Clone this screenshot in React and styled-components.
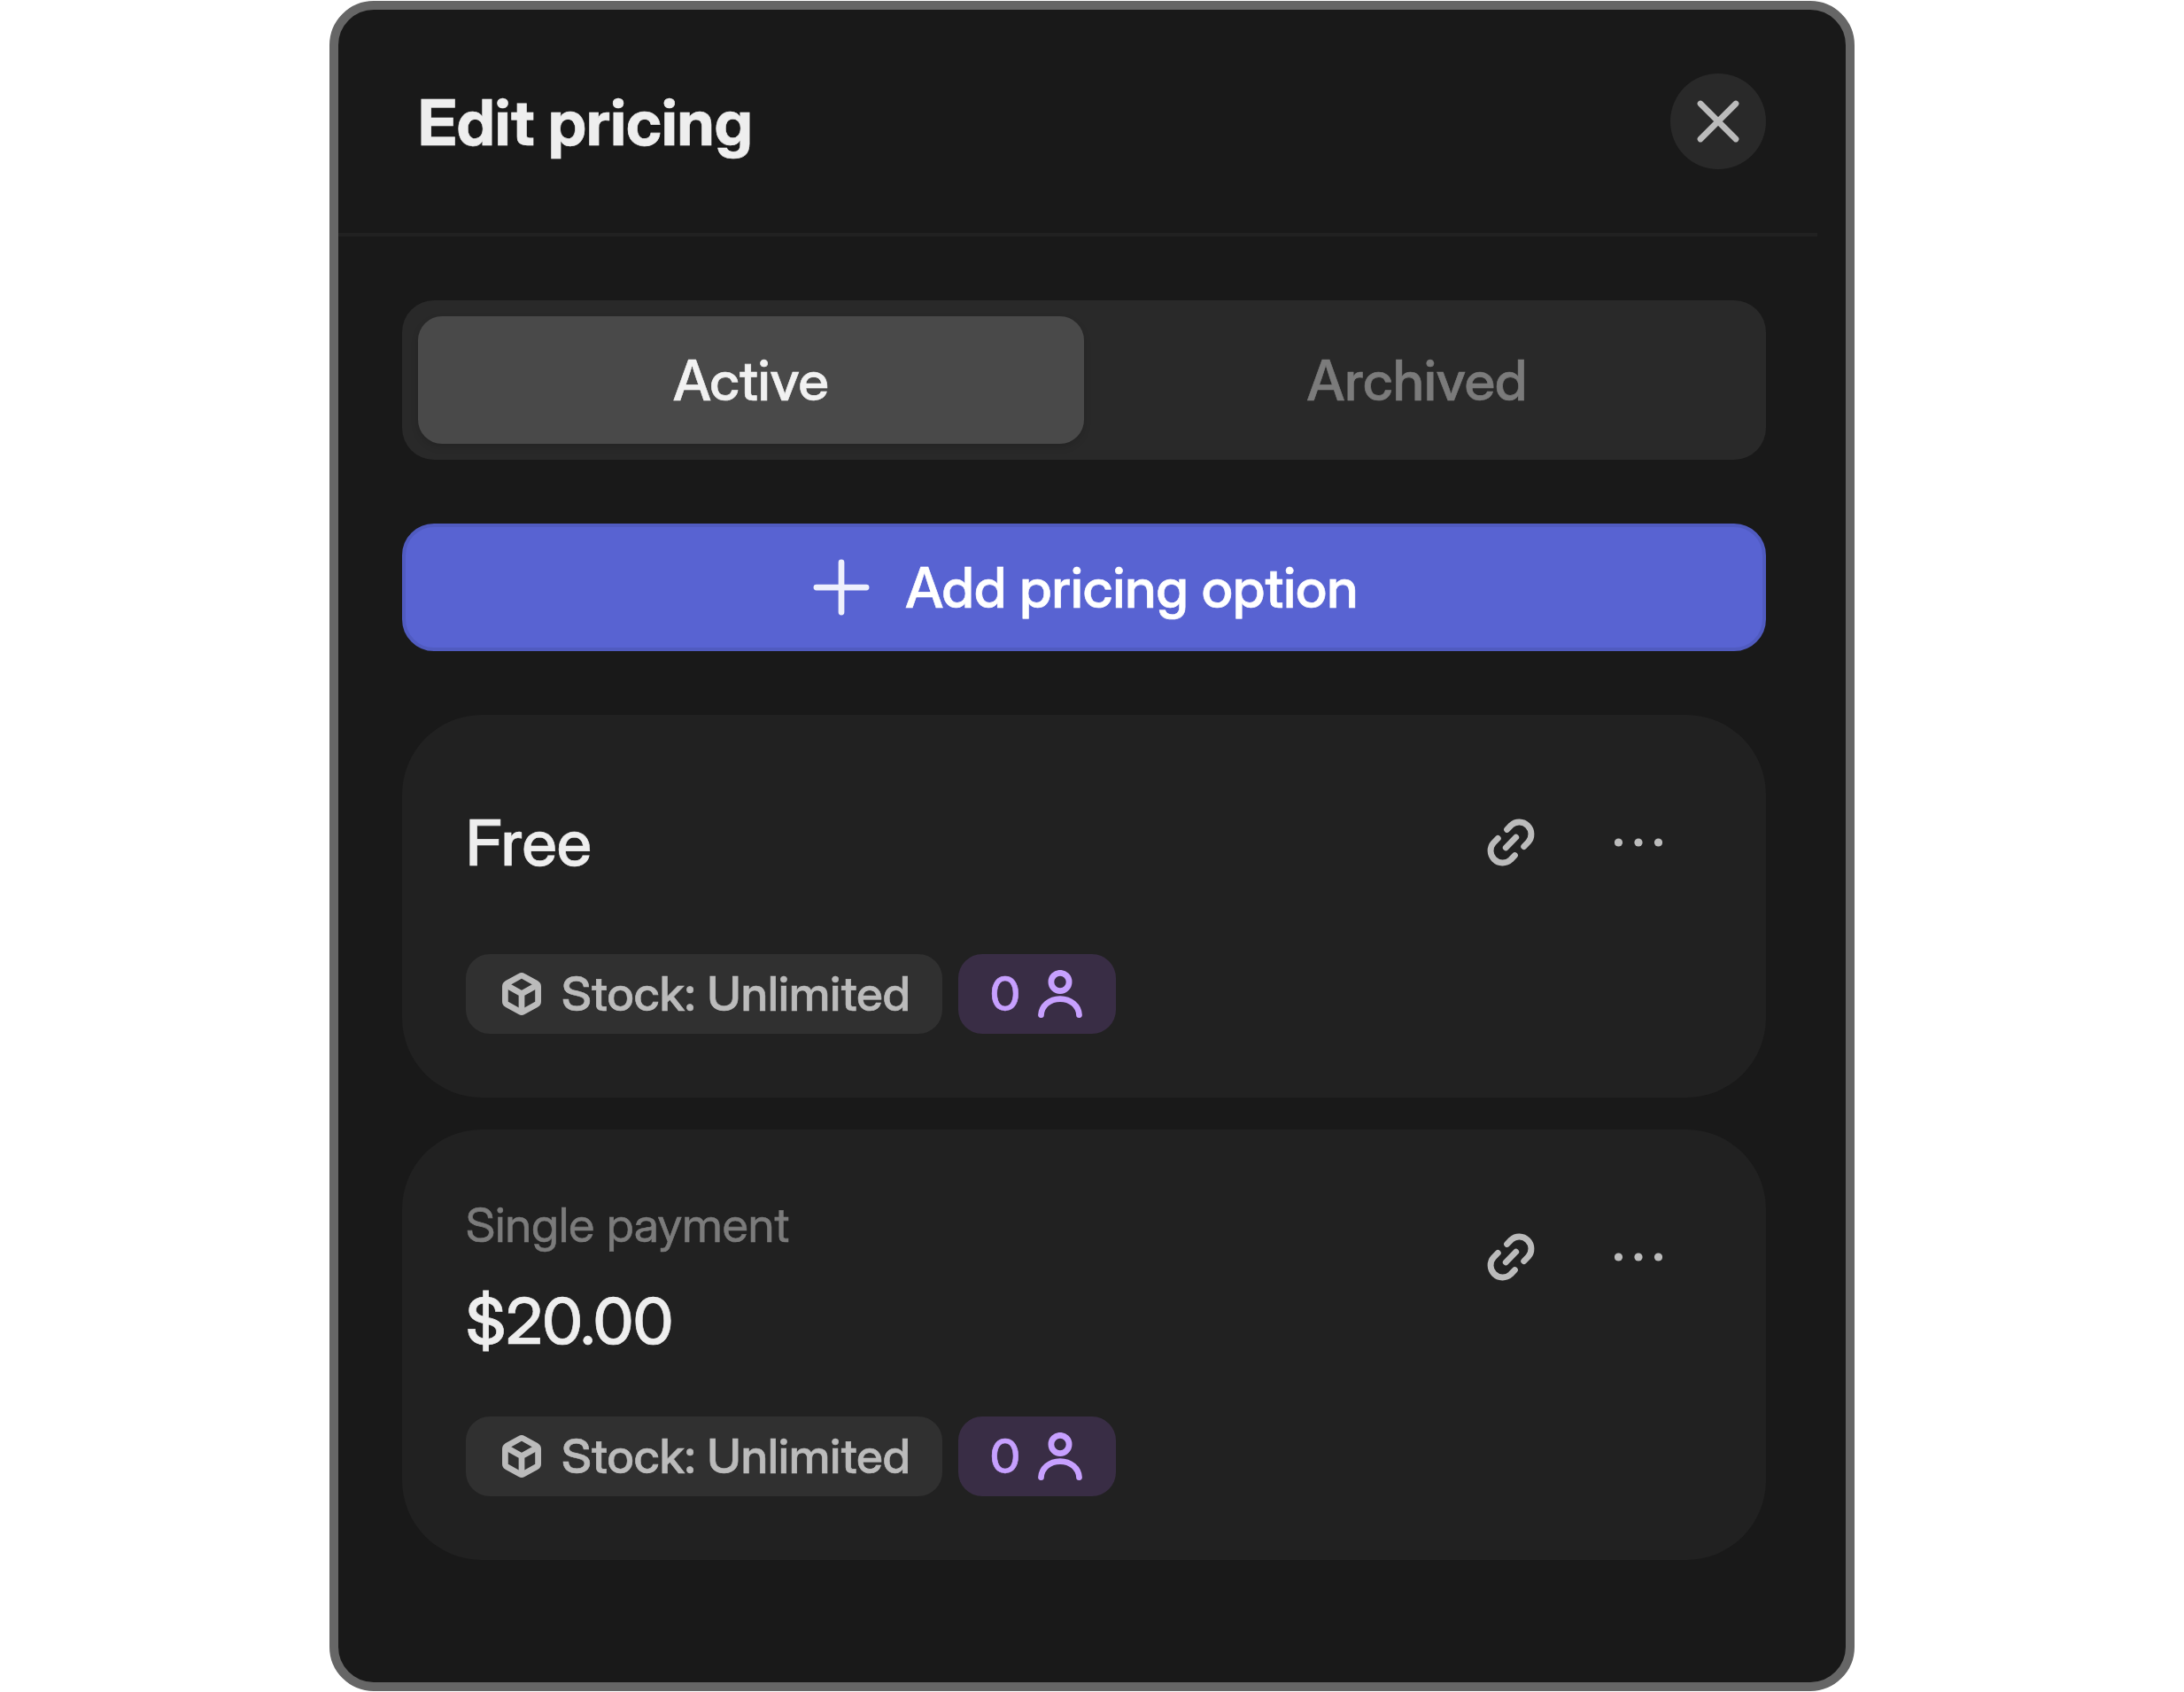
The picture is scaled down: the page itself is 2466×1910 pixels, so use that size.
import React, { useState } from 'react';
import styled, { createGlobalStyle } from 'styled-components';

const plans = [
    { id: 'free', price: 'Free', stock: 'Unlimited', members: 0 },
    {
        id: 'single',
        label: 'Single payment',
        price: '$20.00',
        stock: 'Unlimited',
        members: 0,
    },
];

const CloseIcon = () => (
    <Icon size={54} viewBox='0 0 54 54' strokeWidth='6.75'>
        <path d='M7 7L47 47M47 7L7 47' />
    </Icon>
);

const PlusIcon = () => (
    <Icon size={72} viewBox='0 0 72 72' strokeWidth='6.75'>
        <path d='M36 7.9V64.1M7.9 36H64.1' />
    </Icon>
);

const LinkIcon = () => (
    <Icon size={54} viewBox='0 0 54 54' strokeWidth='6.9'>
        <path d='M22.6 12.4L27.3 7.5A13.6 13.6 0 0 1 46.5 26.7L41.7 31.6' />
        <path d='M12.3 22.4L7.5 27.3A13.6 13.6 0 0 0 26.7 46.5L31.4 41.6' />
        <path d='M21.3 32.8L32.7 21.2' />
    </Icon>
);

const DotsIcon = () => (
    <Icon size={54} viewBox='0 0 54 54' strokeWidth='0'>
        <circle cx='4.5' cy='27' r='4.6' fill='currentColor' />
        <circle cx='27' cy='27' r='4.6' fill='currentColor' />
        <circle cx='49.5' cy='27' r='4.6' fill='currentColor' />
    </Icon>
);

const BoxIcon = () => (
    <Icon size={54} viewBox='0 0 54 54' strokeWidth='6.75'>
        <path d='M25.3 6.9Q27 5.9 28.7 6.9L43.8 15.3Q45.6 16.4 45.6 18.5V35.5Q45.6 37.6 43.8 38.7L28.7 47.1Q27 48.1 25.3 47.1L10.2 38.7Q8.4 37.6 8.4 35.5V18.5Q8.4 16.4 10.2 15.3Z' />
        <path d='M9.6 17L27 26.8L44.4 17M27 26.8V46.5' />
    </Icon>
);

const PersonIcon = () => (
    <Icon size={54} viewBox='0 0 54 54' strokeWidth='6.75'>
        <circle cx='27' cy='13.4' r='10.1' />
        <path d='M5.5 50.6C6 40.5 15 32.5 27 32.5S48 40.5 48.5 50.6' />
    </Icon>
);

const PlanCard = ({ plan }) => (
    <Card>
        <CardTop>
            <PlanInfo>
                {plan.label && <PlanLabel>{plan.label}</PlanLabel>}
                <Price $tall={!plan.label}>{plan.price}</Price>
            </PlanInfo>
            <Actions>
                <ActionButton aria-label='Copy link'>
                    <LinkIcon />
                </ActionButton>
                <ActionButton aria-label='More'>
                    <DotsIcon />
                </ActionButton>
            </Actions>
        </CardTop>
        <Badges>
            <Badge>
                <BoxIcon />
                <BadgeText>Stock: {plan.stock}</BadgeText>
            </Badge>
            <Badge $purple>
                <BadgeText>{plan.members}</BadgeText>
                <PersonIcon />
            </Badge>
        </Badges>
    </Card>
);

export default function App() {
    const [tab, setTab] = useState('Active');

    return (
        <Page>
            <GlobalStyle />
            <Modal>
                <Header>
                    <Title>Edit pricing</Title>
                    <CloseButton aria-label='Close'>
                        <CloseIcon />
                    </CloseButton>
                </Header>
                <Body>
                    <Tabs>
                        {['Active', 'Archived'].map((name) => (
                            <Tab
                                key={name}
                                $active={tab === name}
                                onClick={() => setTab(name)}
                            >
                                {name}
                            </Tab>
                        ))}
                    </Tabs>
                    <AddButton>
                        <PlusIcon />
                        <span>Add pricing option</span>
                    </AddButton>
                    <PlanList>
                        {plans.map((plan) => (
                            <PlanCard key={plan.id} plan={plan} />
                        ))}
                    </PlanList>
                </Body>
            </Modal>
        </Page>
    );
}

const GlobalStyle = createGlobalStyle`
    * {
        box-sizing: border-box;
    }

    body {
        margin: 0;
        background: #fff;
        font-family: 'Inter Display', Inter, 'Liberation Sans', sans-serif;
        font-variation-settings: 'opsz' 32;
        -webkit-text-stroke: 0.6px;
    }

    button {
        margin: 0;
        padding: 0;
        border: 0;
        background: none;
        font: inherit;
        font-variation-settings: inherit;
        cursor: pointer;
    }
`;

const Icon = styled.svg`
    display: block;
    flex: none;
    width: ${(props) => props.size}px;
    height: ${(props) => props.size}px;
    fill: none;
    stroke: currentColor;
    stroke-linecap: round;
    stroke-linejoin: round;
`;

const Page = styled.div`
    display: flex;
    justify-content: center;
    height: 1910px;
    padding-top: 1px;
`;

const Modal = styled.div`
    width: 1722px;
    height: 1908px;
    border: 10px solid #666;
    border-radius: 50px;
    background: #191919;
    overflow: hidden;
`;

const Header = styled.header`
    display: flex;
    align-items: center;
    justify-content: space-between;
    width: 1670px;
    height: 256px;
    padding: 0 58px 0 90px;
    border-bottom: 4px solid #212121;
`;

const Title = styled.h1`
    margin: 0;
    padding-top: 1px;
    color: #eee;
    font-size: 72px;
    font-weight: 700;
    line-height: 107px;
`;

const CloseButton = styled.button`
    display: flex;
    align-items: center;
    justify-content: center;
    width: 108px;
    height: 108px;
    border-radius: 50%;
    background: #292929;
    color: #bbb;
`;

const Body = styled.div`
    display: flex;
    flex-direction: column;
    gap: 72px;
    padding: 72px 90px 0 72px;
`;

const Tabs = styled.div`
    display: flex;
    height: 180px;
    padding: 18px;
    border-radius: 36px;
    background: #292929;
`;

const Tab = styled.button`
    flex: 1;
    border-radius: 27px;
    background: ${(props) => (props.$active ? '#494949' : 'transparent')};
    box-shadow: ${(props) =>
        props.$active ? '0 4px 9px rgba(0, 0, 0, 0.12)' : 'none'};
    color: ${(props) => (props.$active ? '#f1f1f1' : '#7b7b7b')};
    font-size: 63px;
    font-weight: 500;
`;

const AddButton = styled.button`
    display: flex;
    align-items: center;
    justify-content: center;
    gap: 36px;
    height: 144px;
    border: 4px solid #505bc0;
    border-radius: 36px;
    background: #5863d2;
    color: #eef0fc;
    font-size: 63px;
    font-weight: 500;

    span {
        color: #fff;
    }
`;

const PlanList = styled.div`
    display: flex;
    flex-direction: column;
    gap: 36px;
`;

const Card = styled.div`
    display: flex;
    flex-direction: column;
    gap: 54px;
    padding: 72px;
    border-radius: 90px;
    background: #212121;
`;

const CardTop = styled.div`
    display: flex;
    align-items: flex-start;
    justify-content: space-between;
`;

const PlanInfo = styled.div`
    display: flex;
    flex-direction: column;
    gap: 18px;
`;

const PlanLabel = styled.div`
    padding-bottom: 1px;
    color: #7b7b7b;
    font-size: 54px;
    line-height: 71px;
    letter-spacing: 0.0025em;
`;

const Price = styled.div`
    padding-bottom: 1px;
    color: #eee;
    font-size: 72px;
    font-weight: 500;
    line-height: ${(props) => (props.$tall ? 143 : 107)}px;
`;

const Actions = styled.div`
    display: flex;
    gap: 36px;
    padding: 18px;
`;

const ActionButton = styled.button`
    display: flex;
    align-items: center;
    justify-content: center;
    width: 108px;
    height: 108px;
    color: #bbb;
`;

const Badges = styled.div`
    display: flex;
    gap: 18px;
`;

const Badge = styled.div`
    display: flex;
    align-items: center;
    gap: 18px;
    height: 90px;
    padding: 0 36px;
    border-radius: 27px;
    background: ${(props) => (props.$purple ? '#392d45' : '#303030')};
    color: ${(props) => (props.$purple ? '#c7a0ff' : '#bbb')};
    font-size: 54px;
    font-weight: 500;
`;

const BadgeText = styled.span`
    padding-bottom: 1px;
    line-height: 71px;
    letter-spacing: 0.0025em;
`;
